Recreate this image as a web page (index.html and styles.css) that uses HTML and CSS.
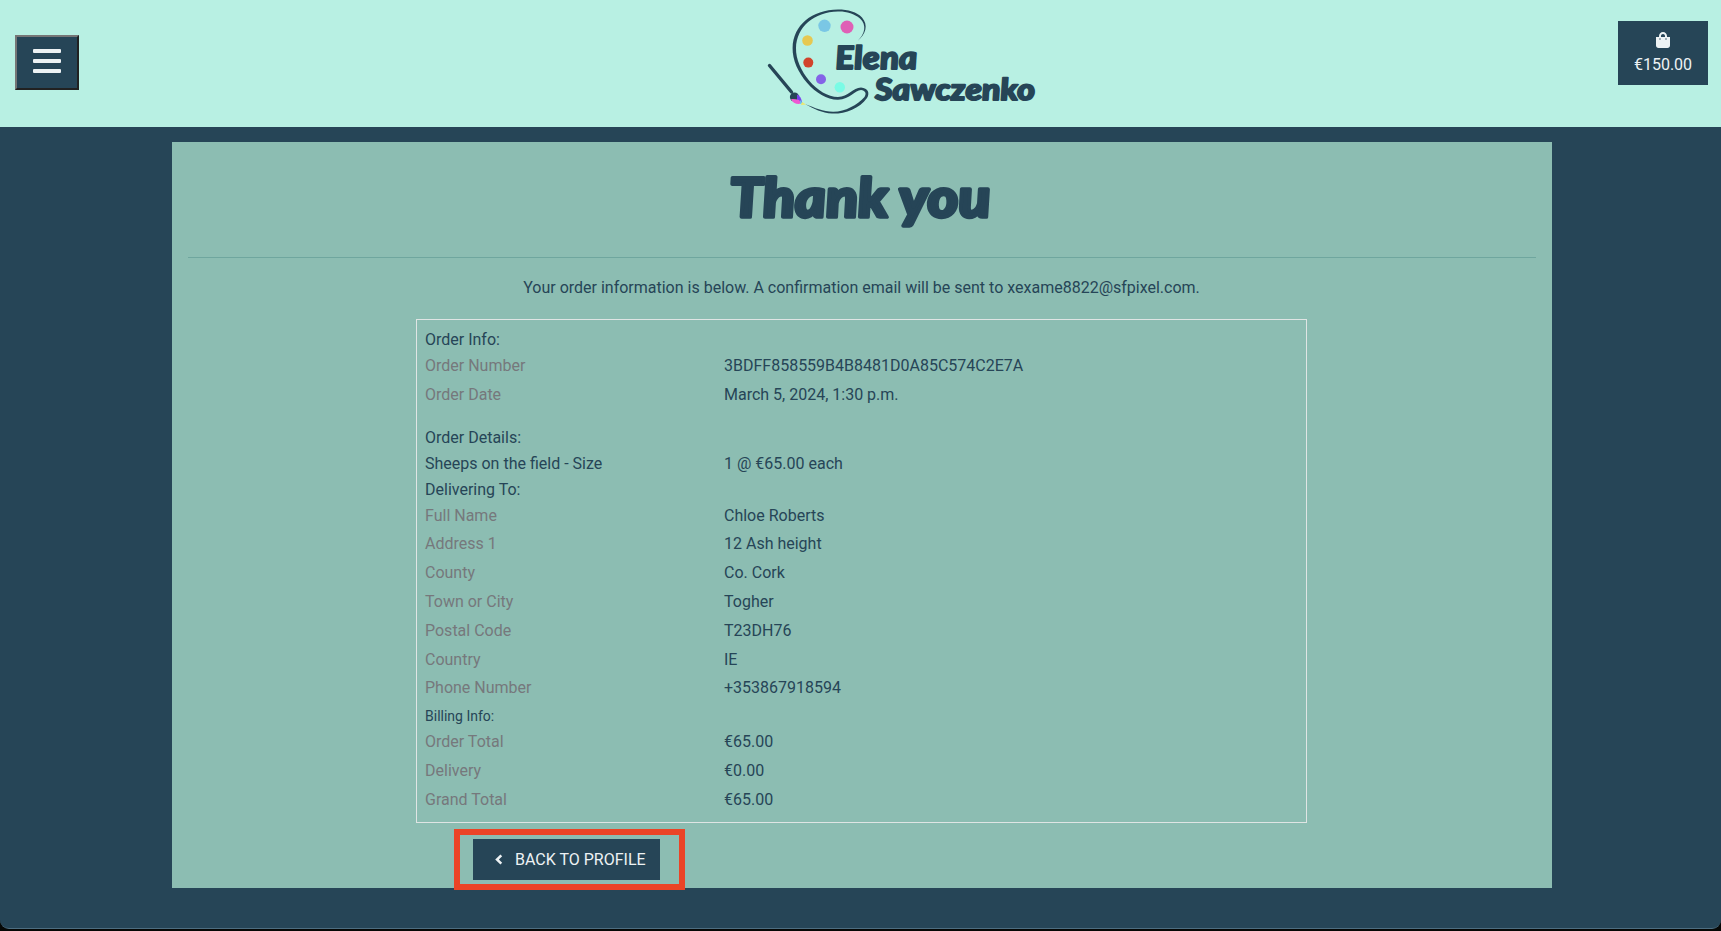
FILE: index.html
```
<!DOCTYPE html>
<html lang="en">
<head>
<meta charset="utf-8">
<title>Thank you - Elena Sawczenko</title>
<link rel="stylesheet" href="styles.css">
</head>
<body>
<div class="window">
  <header class="site-header">
    <button class="menu-btn" aria-label="Menu"><span class="bar"></span><span class="bar"></span><span class="bar"></span></button>
    <svg class="logo" viewBox="760 0 290 127" width="290" height="127">
      <g fill="#264557">
        <path d="M857.500 41C865 34 867 25 860 18.500C854 13.500 846 11.200 838 11.500C814 12 796.500 27 796 48C795.500 70 818 97 838 97C848 97 853 87.500 861 87.500C868 88 870 93 867 98C859 109 845 114 832 113.600C822 113 814 109 805 104C815 108 823 111.500 833 111.800C845 112 857 105 864.500 97C867 93 865 90.500 861 90C855 90 850 99.500 838 99.700C817 100 792 72 792.600 48C793 25 812 9.800 838 9.500C848 9.500 857 12 862 17.500C868.500 25 866 34 857.500 41Z"/>
      </g>
      <path d="M769.500 65.500L791.500 92" stroke="#264557" stroke-width="3.400" stroke-linecap="round"/>
      <circle cx="824.500" cy="25.800" r="6.200" fill="#7ac7e5"/>
      <circle cx="847" cy="27" r="6.500" fill="#df60b6"/>
      <circle cx="807.500" cy="40.500" r="5.300" fill="#e6c851"/>
      <circle cx="808.300" cy="62.600" r="5" fill="#d1432c"/>
      <circle cx="821" cy="79.300" r="5" fill="#8463e7"/>
      <circle cx="839.800" cy="87.300" r="5.200" fill="#7afbe5"/>
      <circle cx="794.500" cy="97" r="4.600" fill="#264557"/>
      <path d="M797 94.500Q801 96 802 102L797 103Z" fill="#7940ee"/>
      <path d="M791 99Q795 98.500 799 100Q802 103 799 104Q793 104 791 99Z" fill="#ee58d2"/>
      <path d="M800 100L803 103L800 104Z" fill="#67bdf0"/>
      <path d="M802 102L806 104.500L801 105Z" fill="#f0e76a"/>
      <g class="script-text">
        <text transform="translate(836 69) skewX(4)" font-size="32" textLength="82" lengthAdjust="spacingAndGlyphs" stroke-width="1.800">Elena</text>
        <text transform="translate(875.500 100) skewX(4)" font-size="30" textLength="160" lengthAdjust="spacingAndGlyphs" stroke-width="1.800">Sawczenko</text>
      </g>
    </svg>
    <a class="bag">
      <svg width="14" height="16" viewBox="0 0 448 512"><path fill="#edf2f4" d="M352 160v-32C352 57.420 294.579 0 224 0 153.420 0 96 57.420 96 128v32H0v272c0 44.183 35.817 80 80 80h288c44.183 0 80-35.817 80-80V160h-96zm-192-32c0-35.290 28.710-64 64-64s64 28.710 64 64v32H160v-32zm160 120c-13.255 0-24-10.745-24-24s10.745-24 24-24 24 10.745 24 24-10.745 24-24 24zm-192 0c-13.255 0-24-10.745-24-24s10.745-24 24-24 24 10.745 24 24-10.745 24-24 24z"/></svg>
      <span>€150.00</span>
    </a>
  </header>
  <main class="panel">
    <h1 class="title">
      <svg width="290" height="90" viewBox="0 0 290 90"><text class="script-text" transform="translate(14.500 65) skewX(4)" font-size="54" textLength="260" lengthAdjust="spacingAndGlyphs" stroke-width="3.600">Thank you</text></svg>
    </h1>
    <hr class="rule">
    <p class="lead">Your order information is below. A confirmation email will be sent to xexame8822@sfpixel.com.</p>
    <section class="order">
      <h2 class="head">Order Info:</h2>
      <div class="row"><span class="label">Order Number</span><span>3BDFF858559B4B8481D0A85C574C2E7A</span></div>
      <div class="row gap"><span class="label">Order Date</span><span>March 5, 2024, 1:30 p.m.</span></div>
      <h2 class="head">Order Details:</h2>
      <div class="row item"><span>Sheeps on the field - Size</span><span>1 @ €65.00 each</span></div>
      <h2 class="head">Delivering To:</h2>
      <div class="row"><span class="label">Full Name</span><span>Chloe Roberts</span></div>
      <div class="row"><span class="label">Address 1</span><span>12 Ash height</span></div>
      <div class="row"><span class="label">County</span><span>Co. Cork</span></div>
      <div class="row"><span class="label">Town or City</span><span>Togher</span></div>
      <div class="row"><span class="label">Postal Code</span><span>T23DH76</span></div>
      <div class="row"><span class="label">Country</span><span>IE</span></div>
      <div class="row"><span class="label">Phone Number</span><span>+353867918594</span></div>
      <h2 class="head small">Billing Info:</h2>
      <div class="row"><span class="label">Order Total</span><span>€65.00</span></div>
      <div class="row"><span class="label">Delivery</span><span>€0.00</span></div>
      <div class="row"><span class="label">Grand Total</span><span>€65.00</span></div>
    </section>
    <div class="highlight">
      <a class="back"><svg width="8" height="11" viewBox="0 0 8 11"><path d="M6.300 1.300L2 5.500L6.300 9.700" fill="none" stroke="#edf2f4" stroke-width="2.500"/></svg><span>BACK TO PROFILE</span></a>
    </div>
  </main>
</div>
</body>
</html>
```
FILE: styles.css
```
* { box-sizing: border-box; }
body {
  margin: 0;
  height: 931px;
  overflow: hidden;
  background: #060806;
  color: #264557;
  font: 16px/26px Roboto, sans-serif;
}
.window {
  height: 929px;
  background: #264557;
  border-bottom: 1px solid #4d6d80;
  border-radius: 0 0 9px 9px;
  overflow: hidden;
}
.site-header {
  height: 127px;
  background: #b8f0e3;
  display: grid;
  grid-template-columns: 760px 290px 1fr;
  align-items: start;
}
.menu-btn {
  width: 64px;
  height: 55px;
  margin: 35px 0 0 15px;
  padding: 0 0 3px;
  background: #264557;
  border: 2px solid;
  border-color: #767676 #212121 #212121 #767676;
  display: flex;
  flex-direction: column;
  align-items: center;
  justify-content: center;
  gap: 6px;
}
.bar { width: 28px; height: 4px; background: #edf2f4; border-radius: 1px; }
.logo { display: block; }
.script-text {
  font-family: Lato, sans-serif;
  font-weight: 900;
  font-style: italic;
  fill: #264557;
  stroke: #264557;
  stroke-linejoin: round;
}
.bag {
  justify-self: end;
  width: 90px;
  height: 64px;
  margin: 21px 13px 0 0;
  padding-top: 11px;
  background: #264557;
  color: #edf2f4;
  display: flex;
  flex-direction: column;
  align-items: center;
  gap: 4px;
}
.panel {
  width: 1380px;
  height: 746px;
  margin: 15px 0 0 172px;
  padding: 0 16px;
  background: #8cbdb2;
}
.title { margin: 0; height: 115px; padding-top: 10px; display: flex; justify-content: center; }
.rule { margin: 0; border: 0; height: 1px; background: #6fa69e; }
.lead { margin: 17px 1px 18px 0; text-align: center; }
.order {
  width: 891px;
  height: 504px;
  margin-left: 228px;
  padding: 7px 8px 0;
  border: 1px solid #dfe5e4;
}
.head { margin: 0; font-size: 16px; line-height: 26px; font-weight: 400; }
.row { display: grid; grid-template-columns: 299px 1fr; height: 28.8px; }
.gap { margin-bottom: 14px; }
.item { height: 26px; }
.label { color: #76787c; }
.head.small { font-size: 14px; line-height: 25px; }
.highlight {
  width: 231px;
  height: 61px;
  margin: 6px 0 0 266px;
  padding: 4px 0 0 13px;
  border: 6px solid #eb4426;
}
.back {
  width: 187px;
  height: 41px;
  background: #264557;
  color: #edf2f4;
  display: flex;
  align-items: center;
  gap: 12px;
  padding-left: 22px;
}
```
